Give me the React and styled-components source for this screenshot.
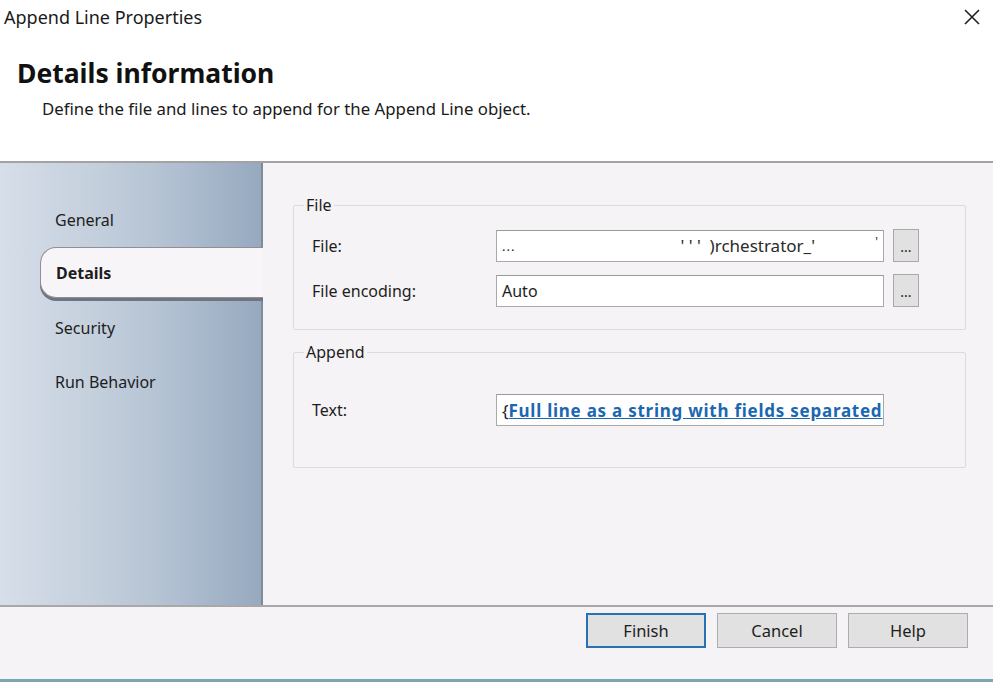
import React from "react";
import styled, { createGlobalStyle } from "styled-components";

const GlobalStyle = createGlobalStyle`
    html, body {
        margin: 0;
        padding: 0;
        background: #ffffff;
    }
    body {
        font-family: "Noto Sans", "Open Sans", sans-serif;
        color: #1a1a1a;
    }
`;

const tabs = ["General", "Details", "Security", "Run Behavior"];

const App = () => {
    return (
        <Window>
            <GlobalStyle />
            <TitleBar>
                <TitleText>Append Line Properties</TitleText>
                <CloseButton>
                    <svg width="18" height="18" viewBox="0 0 18 18">
                        <path d="M2 2 L16 16 M16 2 L2 16" stroke="#222" strokeWidth="1.6" />
                    </svg>
                </CloseButton>
            </TitleBar>

            <Header>
                <HeaderTitle>Details information</HeaderTitle>
                <HeaderSub>Define the file and lines to append for the Append Line object.</HeaderSub>
            </Header>

            <Body>
                <Sidebar>
                    {tabs.map((t) => (
                        <Tab key={t} $selected={t === "Details"}>
                            {t}
                        </Tab>
                    ))}
                </Sidebar>

                <Content>
                    <Group $top="13px" $bottom="22px">
                        <Legend>File</Legend>
                        <Row>
                            <Label>File:</Label>
                            <Input>
                                <Dots>...</Dots>
                                <Masked>' ' '&nbsp;&nbsp;)rchestrator_'</Masked>
                                <Tick>'</Tick>
                            </Input>
                            <BrowseButton>...</BrowseButton>
                        </Row>
                        <Row>
                            <Label>File encoding:</Label>
                            <Input>Auto</Input>
                            <BrowseButton>...</BrowseButton>
                        </Row>
                    </Group>

                    <Group $top="31px" $bottom="41px">
                        <Legend>Append</Legend>
                        <Row>
                            <Label>Text:</Label>
                            <Input>
                                <Brace>{"{"}</Brace>
                                <LinkText>Full line as a string with fields separated</LinkText>
                            </Input>
                        </Row>
                    </Group>
                </Content>
            </Body>

            <Footer>
                <Button $primary>Finish</Button>
                <Button>Cancel</Button>
                <Button>Help</Button>
            </Footer>
        </Window>
    );
};

export default App;

const Window = styled.div`
    width: 993px;
    height: 682px;
    display: flex;
    flex-direction: column;
    background: #f6f3f6;
    overflow: hidden;
`;

const TitleBar = styled.div`
    height: 34px;
    background: #ffffff;
    display: flex;
    align-items: center;
    justify-content: space-between;
    padding: 0 11px 0 4px;
`;

const TitleText = styled.div`
    font-size: 18px;
    color: #1a1a1a;
`;

const CloseButton = styled.div`
    width: 20px;
    height: 20px;
    display: flex;
    align-items: center;
    justify-content: center;
`;

const Header = styled.div`
    height: 129px;
    background: #ffffff;
    border-bottom: 2px solid #a3a3a3;
    padding: 21px 0 0 17px;
    box-sizing: border-box;
`;

const HeaderTitle = styled.div`
    font-size: 26.5px;
    font-weight: 700;
    color: #111;
    line-height: 36px;
`;

const HeaderSub = styled.div`
    font-size: 16.8px;
    margin: 6px 0 0 25px;
    color: #1a1a1a;
`;

const Body = styled.div`
    height: 442px;
    display: flex;
    border-bottom: 2px solid #a8a8a8;
`;

const Sidebar = styled.div`
    width: 261px;
    border-right: 2px solid #7f8b99;
    background: linear-gradient(90deg, #d6dee9 0%, #c5d0dd 35%, #b2c1d2 65%, #97a9bf 100%);
    padding-top: 30px;
    display: flex;
    flex-direction: column;
`;

const Tab = styled.div`
    height: ${({ $selected }) => ($selected ? "51px" : "54px")};
    display: flex;
    align-items: center;
    font-size: 16px;
    color: #1d1d1d;
    box-sizing: border-box;
    padding-left: 55px;
    ${({ $selected }) =>
        $selected &&
        `
        margin-left: 40px;
        margin-right: -2px;
        padding-left: 15px;
        font-weight: 700;
        background: #f8f5f8;
        border: 1px solid #8f8f95;
        border-right: none;
        border-radius: 16px 0 0 16px;
        box-shadow: 0 3px 0 #6d7580;
        margin-bottom: 3px;
    `}
`;

const Content = styled.div`
    flex: 1;
    padding: 31px 27px 0 30px;
    display: flex;
    flex-direction: column;
    gap: 11px;
`;

const Group = styled.fieldset`
    margin: 0;
    border: 1px solid #dcdadc;
    border-radius: 2px;
    padding: ${({ $top, $bottom }) => `${$top} 0 ${$bottom} 10px`};
    display: flex;
    flex-direction: column;
    gap: 12px;
`;

const Legend = styled.legend`
    font-size: 16px;
    padding: 0 2px;
    margin-left: 0;
    color: #1d1d1d;
`;

const Row = styled.div`
    display: flex;
    align-items: center;
    padding-left: 8px;
`;

const Label = styled.div`
    width: 184px;
    font-size: 16px;
    color: #1d1d1d;
`;

const Input = styled.div`
    width: 388px;
    height: 32px;
    box-sizing: border-box;
    background: #ffffff;
    border: 1px solid #a9a9a9;
    border-top-color: #9a9a9a;
    display: flex;
    align-items: center;
    padding: 0 5px;
    font-size: 16px;
    color: #1d1d1d;
    white-space: nowrap;
    overflow: hidden;
`;

const Dots = styled.span`
    font-size: 13px;
    align-self: flex-end;
    margin-bottom: 6px;
    letter-spacing: 1px;
`;

const Masked = styled.span`
    margin-left: 165px;
    font-size: 17px;
    color: #2a2a2a;
`;

const Tick = styled.span`
    margin-left: auto;
    font-size: 12px;
    align-self: flex-start;
    margin-top: 2px;
`;

const Brace = styled.span`
    color: #1d1d1d;
    font-size: 17px;
`;

const LinkText = styled.span`
    color: #1b67b0;
    font-weight: 700;
    font-size: 17px;
    letter-spacing: 0.75px;
    text-decoration: underline;
`;

const BrowseButton = styled.div`
    width: 26px;
    height: 33px;
    margin-left: 9px;
    box-sizing: border-box;
    background: #e1e1e1;
    border: 1px solid #a9a9a9;
    display: flex;
    align-items: flex-end;
    justify-content: center;
    padding-bottom: 7px;
    font-size: 14px;
    line-height: 1;
    color: #1d1d1d;
`;

const Footer = styled.div`
    flex: 1;
    display: flex;
    justify-content: flex-end;
    align-items: flex-start;
    padding: 6px 25px 0 0;
    gap: 11px;
    border-bottom: 3px solid #7aa6b4;
`;

const Button = styled.div`
    width: 120px;
    height: 35px;
    box-sizing: border-box;
    background: #e1e1e1;
    border: ${({ $primary }) => ($primary ? "2px solid #2a71b4" : "1px solid #adadad")};
    display: flex;
    align-items: center;
    justify-content: center;
    font-size: 16.5px;
    color: #1d1d1d;
`;
